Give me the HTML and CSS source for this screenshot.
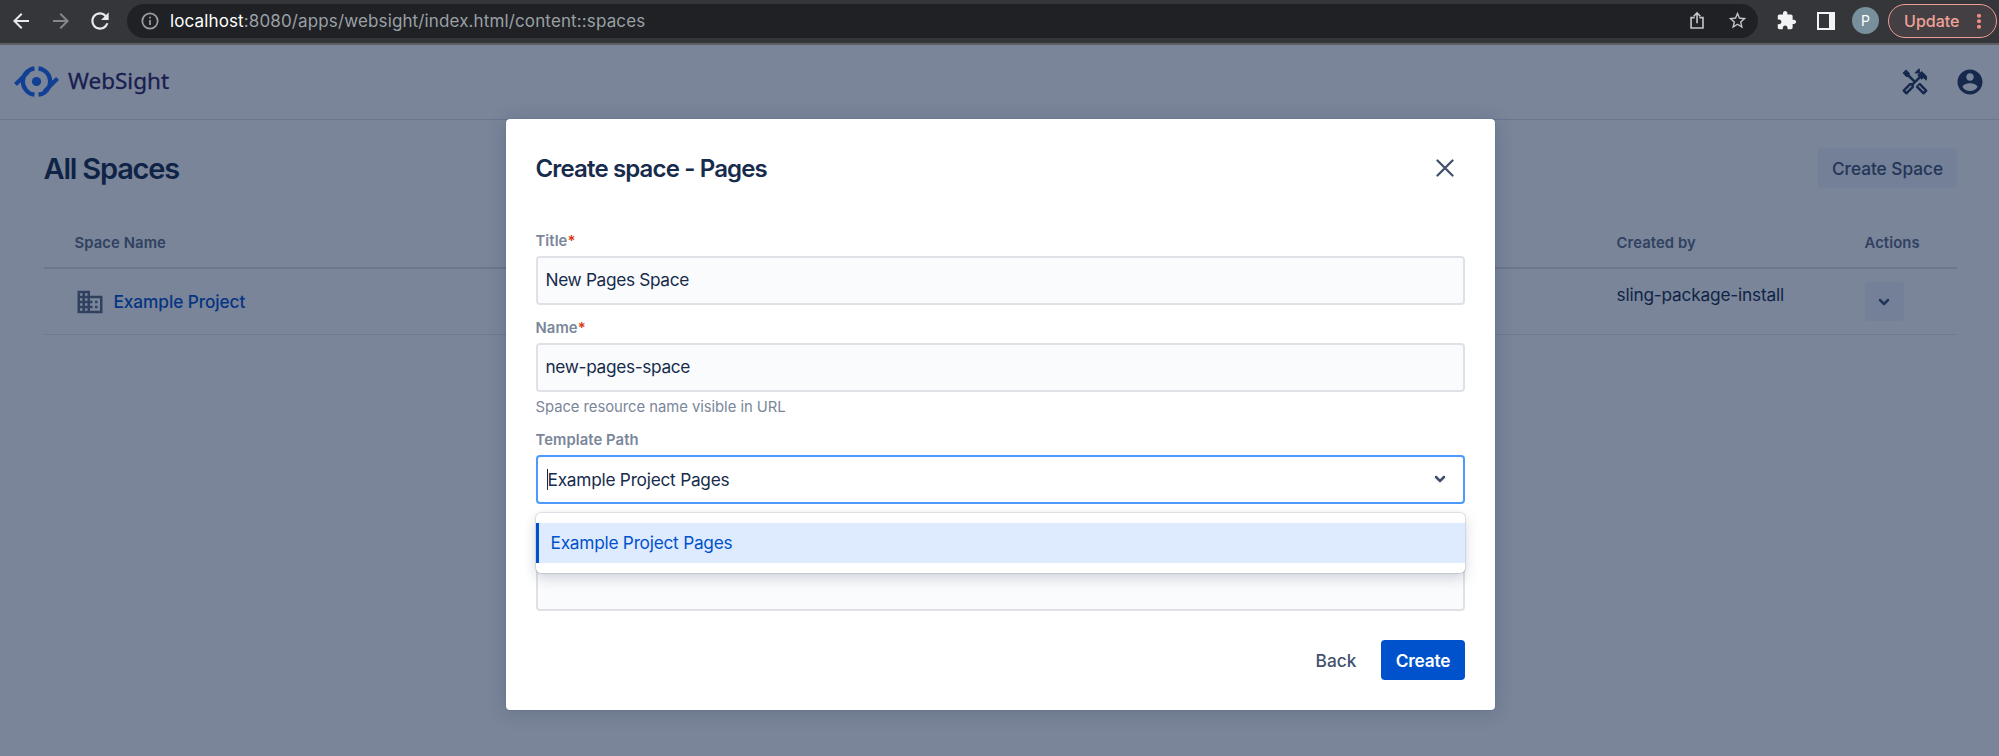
FILE: index.html
```html
<!DOCTYPE html>
<html lang="en">
<head>
<meta charset="utf-8">
<title>WebSight</title>
<link rel="stylesheet" href="styles.css">
</head>
<body>
<div class="browser">
  <svg class="ic back" viewBox="0 0 24 24"><path d="M20 11H7.83l5.59-5.59L12 4l-8 8 8 8 1.41-1.41L7.83 13H20v-2z"/></svg>
  <svg class="ic fwd" viewBox="0 0 24 24"><path d="M4 11h12.17l-5.59-5.59L12 4l8 8-8 8-1.41-1.41L16.17 13H4v-2z"/></svg>
  <svg class="ic reload" viewBox="0 0 24 24"><path d="M17.65 6.35C16.2 4.9 14.21 4 12 4c-4.42 0-7.99 3.58-7.99 8s3.57 8 7.99 8c3.73 0 6.84-2.55 7.73-6h-2.08c-.82 2.33-3.04 4-5.65 4-3.31 0-6-2.69-6-6s2.69-6 6-6c1.66 0 3.14.69 4.22 1.78L13 11h7V4l-2.35 2.35z"/></svg>
  <div class="omnibox">
    <svg class="info" viewBox="0 0 18 18" fill="none" stroke="#9aa0a6" stroke-width="1.7"><circle cx="9" cy="9" r="7.7"/><path d="M9 8v5M9 4.8v1.8"/></svg>
    <div class="url"><b>localhost</b>:8080/apps/websight/index.html/content::spaces</div>
    <svg class="share" viewBox="0 0 18 20" fill="none" stroke="#c4c6c9" stroke-width="1.7"><path d="M6 7H2.200v11h12.600V7H11M8.500 13V2.200M5 5.500l3.500-3.500L12 5.500"/></svg>
    <svg class="star" viewBox="0 0 24 24"><path d="M22 9.240l-7.190-.62L12 2 9.190 8.630 2 9.240l5.460 4.730L5.820 21 12 17.270 18.180 21l-1.630-7.030L22 9.240zM12 15.400l-3.760 2.270 1-4.280-3.320-2.880 4.380-.38L12 6.100l1.710 4.040 4.380.38-3.320 2.880 1 4.280L12 15.400z"/></svg>
  </div>
  <svg class="puzzle" viewBox="0 0 24 24"><path d="M20.500 11H19V7c0-1.100-.9-2-2-2h-4V3.500C13 2.120 11.880 1 10.500 1S8 2.120 8 3.500V5H4c-1.100 0-1.990.9-1.990 2v3.800H3.500c1.490 0 2.700 1.210 2.700 2.700s-1.210 2.700-2.700 2.700H2V20c0 1.100.9 2 2 2h3.800v-1.500c0-1.490 1.210-2.700 2.700-2.700 1.490 0 2.700 1.210 2.700 2.700V22H17c1.100 0 2-.9 2-2v-4h1.500c1.380 0 2.500-1.120 2.500-2.500S21.880 11 20.500 11z"/></svg>
  <span class="panel"></span>
  <span class="avatar">P</span>
  <div class="update"><span>Update</span><i></i></div>
</div>

<div class="app">
  <header class="topbar">
    <svg class="logo" viewBox="0 0 45 32" fill="none" stroke="#1868f5" stroke-width="4.200"><circle cx="22.500" cy="15.500" r="4.600" fill="#1868f5" stroke="none"/><path d="M20.500 2.300A13.300 13.300 0 0 0 20.500 28.700M24.500 2.300A13.300 13.300 0 0 1 24.500 28.700M1.500 18.500L14.500 5.500M43.500 12.500L30.500 25.500"/></svg>
    <span class="brand">WebSight</span>
    <svg class="tools" viewBox="0 0 24 24"><path d="M21.670 18.170l-5.300-5.300h-.99l-2.540 2.540v.99l5.300 5.300c.39.39 1.020.39 1.410 0l2.120-2.120c.39-.38.39-1.020 0-1.410zm-2.830 1.420l-4.240-4.240.71-.71 4.240 4.240-.71.71z"/><path d="M17.340 10.190l1.410-1.410 2.120 2.120c1.170-1.170 1.170-3.070 0-4.240l-3.540-3.540-1.410 1.410V1.710L15.220 1l-3.540 3.540.71.71h2.830l-1.410 1.410 1.060 1.060-2.890 2.890-4.130-4.130V5.060L4.830 2.040 2 4.870 5.030 7.900h1.410l4.130 4.130-.85.85H7.600l-5.300 5.300c-.39.39-.39 1.020 0 1.410l2.120 2.120c.39.39 1.020.39 1.410 0l5.300-5.300v-2.120l5.150-5.150 1.060 1.050zm-7.980 5.150l-4.240 4.240-.71-.71 4.240-4.240.71.71z"/></svg>
    <svg class="account" viewBox="0 0 24 24"><path d="M12 2C6.480 2 2 6.480 2 12s4.480 10 10 10 10-4.480 10-10S17.520 2 12 2zm0 3c1.660 0 3 1.340 3 3s-1.340 3-3 3-3-1.340-3-3 1.340-3 3-3zm0 14.200c-2.500 0-4.710-1.280-6-3.220.03-1.990 4-3.080 6-3.080 1.990 0 5.970 1.090 6 3.080-1.290 1.940-3.500 3.220-6 3.220z"/></svg>
  </header>
  <main class="content">
    <div class="heading"><h1>All Spaces</h1><button class="subtle">Create Space</button></div>
    <div class="row head"><span class="th-name">Space Name</span><span class="th-by">Created by</span><span class="th-act">Actions</span></div>
    <div class="row item">
      <div class="name"><svg viewBox="0 0 24 24"><path d="M12 7V3H2v18h20V7H12zM6 19H4v-2h2v2zm0-4H4v-2h2v2zm0-4H4V9h2v2zm0-4H4V5h2v2zm4 12H8v-2h2v2zm0-4H8v-2h2v2zm0-4H8V9h2v2zm0-4H8V5h2v2zm10 12h-8v-2h2v-2h-2v-2h2v-2h-2V9h8v10zm-2-8h-2v2h2v-2zm0 4h-2v2h2v-2z"/></svg><a>Example Project</a></div>
      <span class="by">sling-package-install</span>
      <div><button class="more"><svg class="chev" viewBox="0 0 12 8"><path d="M2 2l4 4 4-4"/></svg></button></div>
    </div>
  </main>
  <div class="blanket">
    <section class="modal">
      <div class="modal-head"><h2>Create space - Pages</h2><svg class="close" viewBox="0 0 18 18"><path d="M1.500 1.500l15 15M16.500 1.500l-15 15"/></svg></div>
      <label class="l-title">Title<em>*</em></label>
      <div class="field f-title">New Pages Space</div>
      <label class="l-name">Name<em>*</em></label>
      <div class="field f-name">new-pages-space</div>
      <p class="help">Space resource name visible in URL</p>
      <label class="l-tpl">Template Path</label>
      <div class="field focus"><span class="value">Example Project Pages</span><svg class="chev" viewBox="0 0 12 8"><path d="M2 2l4 4 4-4"/></svg>
        <div class="menu"><div class="option">Example Project Pages</div></div>
      </div>
      <div class="field last"></div>
      <div class="actions"><button class="link">Back</button><button class="primary">Create</button></div>
    </section>
  </div>
</div>
</body>
</html>
```
FILE: styles.css
```css
* { box-sizing: border-box; }
body { margin: 0; width: 1999px; height: 756px; overflow: hidden; font-family: Inter, "Liberation Sans", sans-serif; font-size: 17.3px; color: #172b4d; }
svg { display: block; flex: none; }
button { border: 0; padding: 0; font: inherit; font-weight: 500; color: #42526e; border-radius: 4px; }
h1, h2, p { margin: 0; }

.browser { display: flex; align-items: center; height: 45px; padding: 0 2px 2px 9px; background: #35363a; border-bottom: 2px solid #5d5f63; }
.ic { width: 24px; height: 24px; fill: #e8eaed; }
.fwd { margin-left: 16px; fill: #85878a; }
.reload { margin-left: 14px; width: 26px; height: 26px; }
.omnibox { display: flex; align-items: center; width: 1632px; height: 34px; margin-left: 14px; padding-left: 14px; border-radius: 17px; background: #202124; }
.info { width: 18px; height: 18px; }
.url { width: 1519px; margin-left: 11px; color: #9aa0a6; white-space: nowrap; font-size: 17px; line-height: 22px; letter-spacing: .13px; }
.url b { font-weight: 400; color: #fff; }
.share { width: 17px; height: 19px; }
.star { width: 21px; height: 21px; margin-left: 21px; fill: #c4c6c9; }
.puzzle { width: 21px; height: 21px; margin-left: 18px; fill: #f1f3f4; }
.panel { width: 18px; height: 18px; margin-left: 20px; border: solid #f1f3f4; border-width: 2px 6px 2px 2px; }
.avatar { width: 27px; height: 27px; margin-left: 17px; border-radius: 50%; background: #78909c; color: #fff; font-size: 14px; line-height: 27px; text-align: center; }
.update { display: flex; align-items: center; width: 109px; height: 34px; margin-left: 9px; padding-left: 15px; border: 1.5px solid #ee9c94; border-radius: 17px; background: #443f42; color: #f0a199; font-size: 16px; font-weight: 500; }
.update span { width: 73px; }
.update i { width: 4px; height: 16px; background: radial-gradient(circle, #f28b82 1.8px, transparent 2.2px) 0 0 / 4px 5.5px; }

.app { position: relative; height: 711px; background: #fff; }
.topbar { display: flex; align-items: center; height: 75px; padding: 0 14px 1px; border-bottom: 1px solid #dfe1e6; }
.logo { width: 45px; height: 32px; }
.brand { flex: 1; margin-left: 9px; padding-bottom: 3px; font-family: "Noto Sans", sans-serif; font-size: 22.5px; color: #2e205e; -webkit-text-stroke: .3px #2e205e; }
.tools, .account { width: 30px; height: 30px; fill: #253858; }
.account { margin-left: 25px; }
.content { padding: 0 42px 0 43.5px; }
.heading { display: flex; align-items: center; justify-content: space-between; height: 40px; margin-top: 28px; }
h1 { font-size: 29px; font-weight: 600; letter-spacing: -1.2px; }
.subtle { width: 139px; height: 40px; background: #f0f3fb; letter-spacing: -.05px; }
.row { display: grid; grid-template-columns: 1542px 248px 1fr; padding-left: 31px; }
.head { height: 81px; padding-top: 45px; border-bottom: 2px solid #dfe1e6; color: #5e6c84; font-size: 14.8px; font-weight: 600; line-height: 20px; letter-spacing: .1px; }
.item { height: 66px; border-bottom: 1px solid #e6e8ec; }
.name { display: flex; align-items: center; color: #0052cc; font-weight: 500; letter-spacing: -.1px; }
.name svg { width: 30px; height: 30px; fill: #5e6c84; margin-right: 9px; }
.by { padding-top: 15px; line-height: 22px; letter-spacing: -.2px; }
.more { display: flex; align-items: center; justify-content: center; width: 39px; height: 39px; margin-top: 13px; background: #f0f3fb; }
.chev { width: 12px; height: 8px; fill: none; stroke: #42526e; stroke-width: 2.5; stroke-linecap: round; stroke-linejoin: round; }

.blanket { position: absolute; inset: 0; padding: 73.5px 0 0 505.5px; background: rgba(9, 30, 66, .54); }
.modal { width: 989px; height: 591px; padding: 29.5px 29.5px 0 30px; border-radius: 4px; background: #fff; box-shadow: 0 0 1px rgba(9, 30, 66, .4), 0 2px 20px rgba(9, 30, 66, .18); }
.modal-head { display: flex; align-items: center; justify-content: space-between; height: 40px; padding-right: 11px; }
h2 { padding-top: 1px; font-size: 24px; font-weight: 600; letter-spacing: -.85px; }
.close { width: 18px; height: 18px; fill: none; stroke: #42526e; stroke-width: 2.3; stroke-linecap: round; }
label { display: block; height: 20px; color: #7a869a; font-size: 14.8px; font-weight: 600; line-height: 20px; letter-spacing: .08px; }
label em { color: #de350b; font-style: normal; }
.l-title { margin-top: 42.5px; margin-bottom: 5px; }
.l-name { margin-top: 13px; margin-bottom: 5px; }
.l-tpl { margin-top: 12px; margin-bottom: 5px; }
.field { position: relative; display: flex; align-items: center; height: 49px; padding: 0 8px 1px; border: 2.5px solid #dfe1e6; border-radius: 4px; background: #fafbfc; letter-spacing: -.35px; }
.help { margin-top: 6px; height: 20px; color: #7a869a; font-size: 14.8px; line-height: 19px; letter-spacing: -.03px; }
.focus { justify-content: space-between; padding: 0 17px 0 9px; border-color: #4c9aff; background: #fff; letter-spacing: -.25px; }
.value { border-left: 1px solid #172b4d; }
.menu { position: absolute; z-index: 1; top: 56.5px; left: -2px; right: -2px; height: 60px; padding: 10px 0; border-radius: 5px; background: #fff; box-shadow: 0 0 1px 1px rgba(9, 30, 66, .12), 0 5px 14px rgba(9, 30, 66, .18); }
.option { height: 40px; padding-left: 12px; border-left: 3px solid #0052cc; background: #deebff; color: #0052cc; line-height: 40px; }
.last { margin-top: 58px; }
.actions { display: flex; justify-content: flex-end; margin-top: 29.5px; }
.actions button { height: 40px; }
.link { width: 70px; margin-right: 10px; background: none; }
.actions .primary { width: 84px; background: #0052cc; color: #fff; font-weight: 600; letter-spacing: -.2px; }
```
